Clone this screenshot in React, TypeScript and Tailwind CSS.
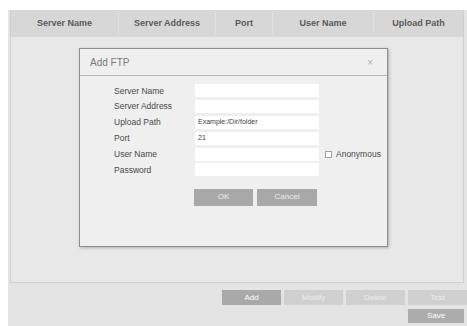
import React from "react";

const cols = [
  { w: "w-[108px]", t: "Server Name" },
  { w: "w-[97px]", t: "Server Address" },
  { w: "w-[57px]", t: "Port" },
  { w: "w-[101px]", t: "User Name" },
  { w: "flex-1", t: "Upload Path" },
];

const rows = [
  { l: "Server Name", v: "" },
  { l: "Server Address", v: "" },
  { l: "Upload Path", v: "Example:/Dir/folder" },
  { l: "Port", v: "21" },
  { l: "User Name", v: "", anon: true },
  { l: "Password", v: "" },
];

export default function App() {
  return (
    <div
      className="relative h-[326px] w-[467px] overflow-hidden bg-white pl-[8px] pt-[10px]"
      style={{ fontFamily: '"Liberation Sans", Arial, sans-serif' }}
    >
      <div className="flex h-[316px] flex-col bg-[#e4e4e4] pl-[2px]">
        {/* table panel */}
        <div className="flex h-[273px] w-[454px] flex-col border-b border-l border-r border-[#cfcfcf] bg-[#e8e8e8]">
          <div className="flex h-[27px] items-center bg-[#d7d7d7]">
            {cols.map((c, i) => (
              <div
                key={c.t}
                className={`${c.w} flex h-[21px] items-center justify-center ${i < 4 ? "border-r border-[#e2e2e2]" : ""} text-[9px] font-bold text-[#5a5a5a]`}
              >
                {c.t}
              </div>
            ))}
          </div>
        </div>
        {/* bottom buttons */}
        <div className="mt-[7px] flex justify-end gap-[3px]">
          <div className="flex h-[15px] w-[59px] items-center justify-center bg-[#a9a9a9] text-[8px] text-white">Add</div>
          <div className="flex h-[15px] w-[59px] items-center justify-center bg-[#d0d0d0] text-[8px] text-[#ececec]">Modify</div>
          <div className="flex h-[15px] w-[59px] items-center justify-center bg-[#d0d0d0] text-[8px] text-[#ececec]">Delete</div>
          <div className="flex h-[15px] w-[59px] shrink-0 items-center justify-center bg-[#d0d0d0] text-[8px] text-[#ececec]">Test</div>
        </div>
        <div className="mt-[4px] flex justify-end pr-[3px]">
          <div className="flex h-[14px] w-[56px] items-center justify-center bg-[#acacac] text-[8px] text-white">Save</div>
        </div>
      </div>

      {/* dialog */}
      <div className="absolute left-[79px] top-[48px] flex h-[199px] w-[309px] flex-col border border-[#8e8e8e] bg-[#efefef] shadow-[1px_1px_3px_rgba(0,0,0,0.25)]">
        <div className="flex h-[27px] items-center justify-between border-b border-[#b8b8b8] pl-[10px] pr-[14px]">
          <span className="text-[10px] text-[#7a7a7a]">Add FTP</span>
          <span className="text-[10px] text-[#b0b0b0]">×</span>
        </div>
        <div className="flex flex-col pl-[34px] pt-[7px]">
          {rows.map((r) => (
            <div key={r.l} className="flex h-[15.8px] items-center">
              <div className="w-[81px] text-[8.5px] text-[#4a4a4a]">{r.l}</div>
              <div className="flex h-[13px] w-[124px] items-center bg-white pl-[3px] text-[7px] text-[#444]">
                {r.v}
              </div>
              {r.anon && (
                <div className="ml-[6px] flex items-center gap-[4px]">
                  <div className="h-[7px] w-[7px] border border-[#a0a0a0] bg-white" />
                  <span className="text-[8.5px] text-[#4a4a4a]">Anonymous</span>
                </div>
              )}
            </div>
          ))}
          <div className="mt-[11px] flex gap-[4px] pl-[80px]">
            <div className="flex h-[17px] w-[59px] items-center justify-center bg-[#a8a8a8] text-[8px] text-[#ececec]">OK</div>
            <div className="flex h-[17px] w-[60px] items-center justify-center bg-[#a8a8a8] text-[8px] text-[#ececec]">Cancel</div>
          </div>
        </div>
      </div>
    </div>
  );
}
